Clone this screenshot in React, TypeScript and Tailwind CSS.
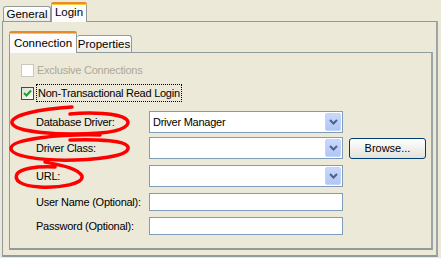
import React from "react";

const font = { fontFamily: '"Liberation Sans", Arial, sans-serif' };

function Chevron() {
  return (
    <svg width="9" height="6" viewBox="0 0 9 6">
      <path d="M1 1 L4.5 4.5 L8 1" fill="none" stroke="#4d6185" strokeWidth="2" />
    </svg>
  );
}

function Combo({ value }: { value?: string }) {
  return (
    <div className="flex h-[22px] w-[194px] items-center border border-[#7f9db9] bg-white pl-[3px] pr-[1px]">
      <span className="flex-1 truncate">{value}</span>
      <div className="flex h-[18px] w-[16px] items-center justify-center rounded-[2px] border border-[#c3d3fd] bg-gradient-to-b from-[#c8d8fd] to-[#b1c6f4]">
        <Chevron />
      </div>
    </div>
  );
}

function TextField() {
  return <div className="h-[18px] w-[194px] border border-[#7f9db9] bg-white" />;
}

function Checkbox({ checked, disabled }: { checked?: boolean; disabled?: boolean }) {
  return (
    <div
      className={`flex h-[13px] w-[13px] items-center justify-center border ${
        disabled ? "border-[#cac8bb] bg-white" : "border-[#1c5180] bg-gradient-to-br from-[#dcdcd7] to-white"
      }`}
    >
      {checked && (
        <svg width="9" height="9" viewBox="0 0 9 9">
          <path d="M1 4 L3.5 6.5 L8 1.5" fill="none" stroke="#21a121" strokeWidth="2" />
        </svg>
      )}
    </div>
  );
}

export default function App() {
  return (
    <div
      className="relative h-[258px] w-[441px] overflow-hidden bg-[#ece9d8] text-[11px] tracking-[-0.25px] text-black"
      style={font}
    >
      {/* outer tabs */}
      <div className="flex h-[21px] items-end pl-[3px] text-[11.5px] tracking-normal">
        <div className="flex h-[15px] w-[48px] items-center justify-center rounded-t-[3px] border border-b-0 border-[#919b9c] bg-gradient-to-b from-white to-[#ecebe5] pt-[1px]">
          General
        </div>
        <div className="relative -mb-px flex h-[20px] w-[36px] items-center justify-center rounded-t-[3px] border-x border-[#919b9c] bg-[#fcfcfe] pt-[2px]">
          <div className="absolute -left-px -right-px top-0 h-[3px] rounded-t-[3px] border-b border-[#ffc83c] bg-[#e68b2c]" />
          Login
        </div>
      </div>

      {/* outer panel */}
      <div className="ml-[2px] h-[236px] w-[436px] border border-r-2 border-b-2 border-[#919b9c] border-r-[#9ea5a6] bg-[#ece9d8] pl-[6px] pt-[8px]">
        {/* inner tabs */}
        <div className="flex h-[22px] items-end text-[11.5px] tracking-normal">
          <div className="relative -mb-px flex h-[22px] w-[68px] items-center justify-center rounded-t-[3px] border-x border-[#919b9c] bg-[#fcfcfe] pt-[3px]">
            <div className="absolute -left-px -right-px top-0 h-[3px] rounded-t-[3px] border-b border-[#ffc83c] bg-[#e68b2c]" />
            Connection
          </div>
          <div className="flex h-[17px] w-[55px] items-center justify-center rounded-t-[3px] border border-b-0 border-l-0 border-[#919b9c] bg-gradient-to-b from-white to-[#ecebe5] pt-[1px]">
            Properties
          </div>
        </div>

        {/* inner panel */}
        <div className="h-[198px] w-[424px] border border-r-2 border-b-2 border-[#919b9c] border-r-[#9ea5a6] bg-[#ece9d8] pl-[11px] pt-[9px]">
          <div className="flex h-[16px] items-center gap-[2px]">
            <Checkbox disabled />
            <span className="px-[1px] text-[#aca899]">Exclusive Connections</span>
          </div>
          <div className="mt-[7px] flex h-[16px] items-center gap-[2px]">
            <Checkbox checked />
            <span className="border border-dotted border-black px-[1px]">Non-Transactional Read Login</span>
          </div>

          <div className="mt-[10px] grid grid-cols-[107px_194px_77px] items-center gap-x-[6px] pl-[15px]">
            <span className="h-[22px] leading-[22px]">Database Driver:</span>
            <Combo value="Driver Manager" />
            <span />

            <span className="mt-[4px] leading-[22px]">Driver Class:</span>
            <div className="mt-[4px]">
              <Combo />
            </div>
            <div className="mt-[4px] flex h-[21px] items-center justify-center rounded-[3px] border border-[#003c74] bg-gradient-to-b from-white to-[#e3e2da] tracking-normal">
              Browse...
            </div>

            <span className="mt-[6px] leading-[22px]">URL:</span>
            <div className="mt-[6px]">
              <Combo />
            </div>
            <span />

            <span className="mt-[6px] leading-[18px]">User Name (Optional):</span>
            <div className="mt-[6px]">
              <TextField />
            </div>
            <span />

            <span className="mt-[6px] leading-[18px]">Password (Optional):</span>
            <div className="mt-[6px]">
              <TextField />
            </div>
            <span />
          </div>
        </div>
      </div>

      {/* red annotations */}
      <svg className="pointer-events-none absolute left-0 top-0" width="441" height="258" viewBox="0 0 441 258">
        <g fill="none" stroke="#ff0000" strokeWidth="3.5" strokeLinecap="round">
          <path d="M72,107 C40,109 10,115 12,123 C14,132 60,136 100,133 C125,131 132,124 126,119 C118,113 90,112 70,114" />
          <path d="M100,135 C60,134 12,139 11,148 C10,156 40,161 75,160 C110,159 130,154 128,147 C126,141 100,139 70,140" />
          <path d="M45,162 C60,165 78,168 82,176 C84,184 60,188 40,187 C20,186 14,180 17,174 C20,169 35,166 55,167" />
        </g>
      </svg>
    </div>
  );
}
